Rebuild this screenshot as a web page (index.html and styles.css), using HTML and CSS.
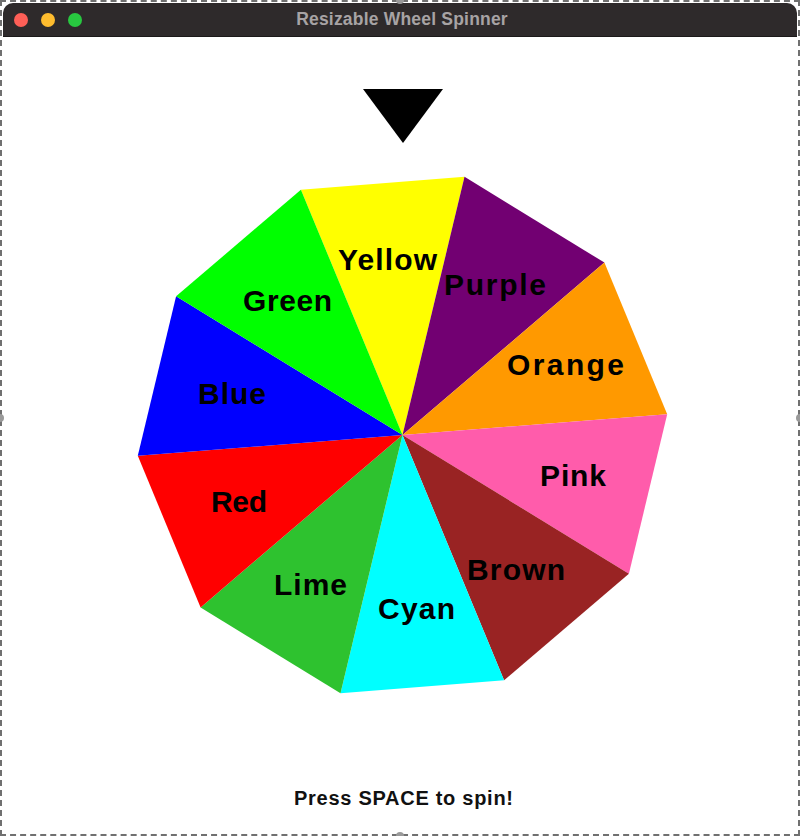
FILE: index.html
```html
<!DOCTYPE html>
<html>
<head>
<meta charset="utf-8">
<title>Resizable Wheel Spinner</title>
<link rel="stylesheet" href="styles.css">
</head>
<body>
<div class="screen">
  <div class="window">
    <div class="titlebar">
      <div class="lights">
        <span class="light light-red"></span>
        <span class="light light-yellow"></span>
        <span class="light light-green"></span>
      </div>
      <div class="title">Resizable Wheel Spinner</div>
      <div class="spacer"></div>
    </div>
    <div class="canvas">
      <svg class="wheel" width="794" height="796" viewBox="3 37 794 796" xmlns="http://www.w3.org/2000/svg">
        <polygon class="seg" fill="#ffff00" points="402.5,435 300.9,189.7 464.5,176.8"/>
        <polygon class="seg" fill="#720072" points="402.5,435 464.5,176.8 604.4,262.6"/>
        <polygon class="seg" fill="#ff9900" points="402.5,435 604.4,262.6 667.2,414.2"/>
        <polygon class="seg" fill="#ff5cab" points="402.5,435 667.2,414.2 628.9,573.7"/>
        <polygon class="seg" fill="#992323" points="402.5,435 628.9,573.7 504.1,680.3"/>
        <polygon class="seg" fill="#00ffff" points="402.5,435 504.1,680.3 340.5,693.2"/>
        <polygon class="seg" fill="#2ec22f" points="402.5,435 340.5,693.2 200.6,607.4"/>
        <polygon class="seg" fill="#ff0000" points="402.5,435 200.6,607.4 137.8,455.8"/>
        <polygon class="seg" fill="#0000ff" points="402.5,435 137.8,455.8 176.1,296.3"/>
        <polygon class="seg" fill="#00ff00" points="402.5,435 176.1,296.3 300.9,189.7"/>

        <text class="label" x="338" y="270" textLength="99" lengthAdjust="spacing">Yellow</text>
        <text class="label" x="444" y="295" textLength="102" lengthAdjust="spacing">Purple</text>
        <text class="label" x="507" y="375" textLength="117" lengthAdjust="spacing">Orange</text>
        <text class="label" x="540" y="486" textLength="66" lengthAdjust="spacing">Pink</text>
        <text class="label" x="467" y="580" textLength="98" lengthAdjust="spacing">Brown</text>
        <text class="label" x="378" y="619" textLength="77" lengthAdjust="spacing">Cyan</text>
        <text class="label" x="274" y="595" textLength="73" lengthAdjust="spacing">Lime</text>
        <text class="label" x="211" y="512" textLength="56" lengthAdjust="spacing">Red</text>
        <text class="label" x="198" y="404" textLength="68" lengthAdjust="spacing">Blue</text>
        <text class="label" x="243" y="311" textLength="89" lengthAdjust="spacing">Green</text>

        <polygon class="pointer" points="363,89 443,89 403,143"/>

        <text class="caption" x="294" y="805" textLength="219" lengthAdjust="spacing">Press SPACE to spin!</text>
      </svg>
    </div>
  </div>
  <span class="handle handle-top"></span>
  <span class="handle handle-left"></span>
  <span class="handle handle-right"></span>
  <span class="handle handle-bottom"></span>
</div>
</body>
</html>
```

FILE: styles.css
```css
html, body {
  margin: 0;
  padding: 0;
  background: #ffffff;
}

.screen {
  position: relative;
  width: 800px;
  height: 836px;
  box-sizing: border-box;
  border: 2px dashed #707070;
  padding: 1px;
  background: #ffffff;
}

.window {
  display: flex;
  flex-direction: column;
  height: 100%;
  background: #ffffff;
  border-radius: 10px 10px 0 0;
  overflow: hidden;
}

.titlebar {
  height: 33px;
  flex: 0 0 auto;
  display: grid;
  grid-template-columns: 1fr auto 1fr;
  align-items: center;
  background: #2e2a2b;
  border-bottom: 1px solid #1b1919;
}

.lights {
  display: flex;
  align-items: center;
  gap: 13px;
  padding-left: 11px;
  padding-top: 1px;
}

.light {
  width: 14px;
  height: 14px;
  border-radius: 50%;
  display: block;
}

.light-red { background: #fe5f57; }
.light-yellow { background: #febc2e; }
.light-green { background: #28c840; }

.title {
  font-family: "Liberation Sans", Arial, sans-serif;
  font-weight: bold;
  font-size: 17.5px;
  letter-spacing: 0.2px;
  color: #a7a3a4;
  padding-left: 4px;
}

.canvas {
  flex: 1 1 auto;
  background: #ffffff;
}

.wheel {
  display: block;
}

.label {
  font-family: "Liberation Sans", Arial, sans-serif;
  font-weight: bold;
  font-size: 30px;
  fill: #000000;
}

.caption {
  font-family: "Liberation Sans", Arial, sans-serif;
  font-weight: bold;
  font-size: 20px;
  fill: #111111;
}

.pointer {
  fill: #000000;
}

.handle {
  position: absolute;
  width: 8px;
  height: 8px;
  border-radius: 50%;
  background: #9a9a9a;
}

.handle-top { left: 394px; top: -6px; }
.handle-bottom { left: 394px; bottom: -6px; }
.handle-left { left: -6px; top: 412px; }
.handle-right { right: -6px; top: 412px; }
```
